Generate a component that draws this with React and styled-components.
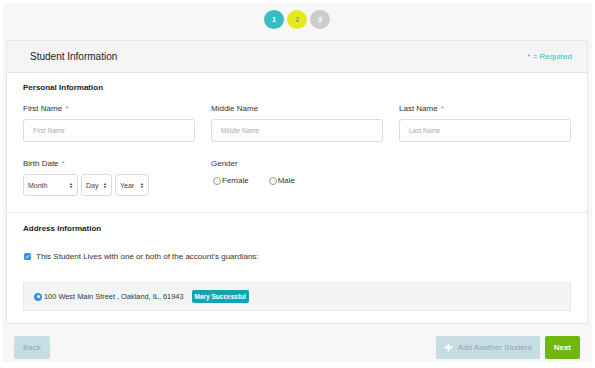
import React from "react";
import styled, { createGlobalStyle } from "styled-components";

const Global = createGlobalStyle`
  html, body { margin: 0; padding: 0; background: #ffffff; }
  body { font-family: "Liberation Sans", Arial, sans-serif; color: #333; }
  * { box-sizing: border-box; }
`;

const Page = styled.div`
  margin: 3px 0 0 3px;
  width: 589px;
  height: 359px;
  background: #f7f7f7;
  display: flex;
  flex-direction: column;
  padding: 7px 4px 0 3px;
`;

const Steps = styled.div`
  display: flex;
  justify-content: center;
  gap: 3px;
  height: 19px;
`;

const Step = styled.div`
  width: 20px;
  height: 19px;
  border-radius: 50%;
  background: ${(p) => p.$bg};
  color: ${(p) => p.$fg};
  font-size: 7.5px;
  font-weight: bold;
  display: flex;
  align-items: center;
  justify-content: center;
`;

const Card = styled.div`
  margin-top: 11px;
  background: #fff;
  border: 1px solid #e6e6e6;
  border-radius: 2px;
`;

const CardHeader = styled.div`
  height: 32px;
  background: #f5f5f5;
  border-bottom: 1px solid #e8e8e8;
  display: flex;
  align-items: center;
  justify-content: space-between;
  padding: 0 15px 0 23px;
`;

const Title = styled.div`
  font-size: 10px;
  color: #222;
`;

const Required = styled.div`
  font-size: 8px;
  color: #3bb6c0;
`;

const Section = styled.div`
  padding: ${(p) => p.$pad};
  border-top: ${(p) => (p.$divider ? "1px solid #ececec" : "none")};
`;

const SectionTitle = styled.div`
  font-size: 8px;
  font-weight: bold;
  color: #222;
  line-height: 10px;
`;

const Grid = styled.div`
  display: grid;
  grid-template-columns: repeat(3, 172px);
  column-gap: 16px;
  row-gap: 17px;
  margin-top: ${(p) => p.$mt}px;
`;

const Field = styled.div`
  display: flex;
  flex-direction: column;
`;

const Label = styled.div`
  font-size: 8px;
  line-height: 10px;
  color: #333;
  margin-bottom: 5px;
`;

const Star = styled.span`
  color: #3bb6c0;
  margin-left: 3px;
`;

const Input = styled.div`
  height: 23px;
  border: 1px solid #dcdcdc;
  border-radius: 3px;
  background: #fff;
  display: flex;
  align-items: center;
  padding-left: 9px;
  font-size: 6.5px;
  color: #a9adb3;
`;

const SelectRow = styled.div`
  display: flex;
  gap: 3px;
`;

const Select = styled.div`
  width: ${(p) => p.$w}px;
  height: 22px;
  border: 1px solid #dcdcdc;
  border-radius: 3px;
  background: #fff;
  display: flex;
  align-items: center;
  justify-content: space-between;
  padding: 0 4px 0 4px;
  font-size: 7px;
  color: #444;
`;

const Radios = styled.div`
  display: flex;
  gap: 20px;
  padding-top: 2px;
  padding-left: 2px;
`;

const RadioLabel = styled.div`
  display: flex;
  align-items: center;
  gap: 1px;
  font-size: 8px;
  color: #333;
`;

const RadioDot = styled.span`
  width: 8px;
  height: 8px;
  border-radius: 50%;
  border: 1px solid #9a9a9a;
  background: #fff;
  display: inline-block;
`;

const RadioOn = styled.span`
  width: 8px;
  height: 8px;
  border-radius: 50%;
  background: #3a8ff0;
  display: inline-flex;
  align-items: center;
  justify-content: center;
  &::after {
    content: "";
    width: 3px;
    height: 3px;
    border-radius: 50%;
    background: #fff;
  }
`;

const CheckRow = styled.div`
  display: flex;
  align-items: center;
  gap: 5px;
  margin-top: 18px;
  font-size: 8px;
  color: #333;
  padding-left: 1px;
`;

const CheckBox = styled.span`
  width: 7px;
  height: 7px;
  border-radius: 1.5px;
  background: #3a8ff0;
  display: inline-flex;
  align-items: center;
  justify-content: center;
`;

const AddressBox = styled.div`
  margin-top: 21px;
  height: 29px;
  background: #f3f4f4;
  border: 1px solid #e8e9e9;
  display: flex;
  align-items: center;
  padding-left: 10px;
  font-size: 7.4px;
  color: #333;
`;

const AddrText = styled.span`
  margin-left: 2px;
`;

const Badge = styled.span`
  margin-left: 8px;
  background: #17a2b4;
  color: #fff;
  font-size: 6.5px;
  font-weight: bold;
  padding: 3px 3px;
  border-radius: 2px;
`;

const Footer = styled.div`
  display: flex;
  justify-content: space-between;
  margin-top: 12px;
  padding: 0 8px 0 8px;
`;

const Right = styled.div`
  display: flex;
  gap: 5px;
`;

const Button = styled.div`
  height: 23px;
  padding: 0 ${(p) => p.$px}px;
  border-radius: 2px;
  background: ${(p) => p.$bg};
  color: ${(p) => p.$fg};
  font-size: 8px;
  font-weight: ${(p) => (p.$bold ? "bold" : "normal")};
  display: flex;
  align-items: center;
  gap: 5px;
`;

const Arrows = () => (
  <svg width="4" height="7" viewBox="0 0 4 7">
    <path d="M0.5 3 L2 1 L3.5 3 Z M0.5 4 L2 6 L3.5 4 Z" fill="#555" />
  </svg>
);

export default function App() {
  return (
    <>
      <Global />
      <Page>
        <Steps>
          <Step $bg="#37bcc4" $fg="#fff">1</Step>
          <Step $bg="#e6ea19" $fg="#3bb6c0">2</Step>
          <Step $bg="#cccccc" $fg="#fff">3</Step>
        </Steps>
        <Card>
          <CardHeader>
            <Title>Student Information</Title>
            <Required>* = Required</Required>
          </CardHeader>
          <Section $pad="10px 16px 16px 16px">
            <SectionTitle>Personal Information</SectionTitle>
            <Grid $mt={11}>
              <Field>
                <Label>First Name<Star>*</Star></Label>
                <Input>First Name</Input>
              </Field>
              <Field>
                <Label>Middle Name</Label>
                <Input>Middle Name</Input>
              </Field>
              <Field>
                <Label>Last Name<Star>*</Star></Label>
                <Input>Last Name</Input>
              </Field>
              <Field>
                <Label>Birth Date<Star>*</Star></Label>
                <SelectRow>
                  <Select $w={55}>Month<Arrows /></Select>
                  <Select $w={31}>Day<Arrows /></Select>
                  <Select $w={34}>Year<Arrows /></Select>
                </SelectRow>
              </Field>
              <Field>
                <Label>Gender</Label>
                <Radios>
                  <RadioLabel><RadioDot />Female</RadioLabel>
                  <RadioLabel><RadioDot />Male</RadioLabel>
                </Radios>
              </Field>
            </Grid>
          </Section>
          <Section $divider $pad="11px 16px 12px 16px">
            <SectionTitle>Address Information</SectionTitle>
            <CheckRow>
              <CheckBox>
                <svg width="5" height="5" viewBox="0 0 5 5">
                  <path d="M0.8 2.6 L2 3.8 L4.2 1.2" stroke="#fff" strokeWidth="1" fill="none" />
                </svg>
              </CheckBox>
              This Student Lives with one or both of the account's guardians:
            </CheckRow>
            <AddressBox>
              <RadioOn />
              <AddrText>100 West Main Street , Oakland, IL, 61943</AddrText>
              <Badge>Mary Successful</Badge>
            </AddressBox>
          </Section>
        </Card>
        <Footer>
          <Button $px={9} $bg="#c6dde3" $fg="#8fa6ad">Back</Button>
          <Right>
            <Button $px={8} $bg="#c6dde3" $fg="#8fa6ad">
              <svg width="9" height="9" viewBox="0 0 9 9">
                <path d="M4.5 0.5 V8.5 M0.5 4.5 H8.5" stroke="#fff" strokeWidth="2" />
              </svg>
              Add Another Student
            </Button>
            <Button $px={9} $bg="#6db80b" $fg="#fff" $bold>Next</Button>
          </Right>
        </Footer>
      </Page>
    </>
  );
}
